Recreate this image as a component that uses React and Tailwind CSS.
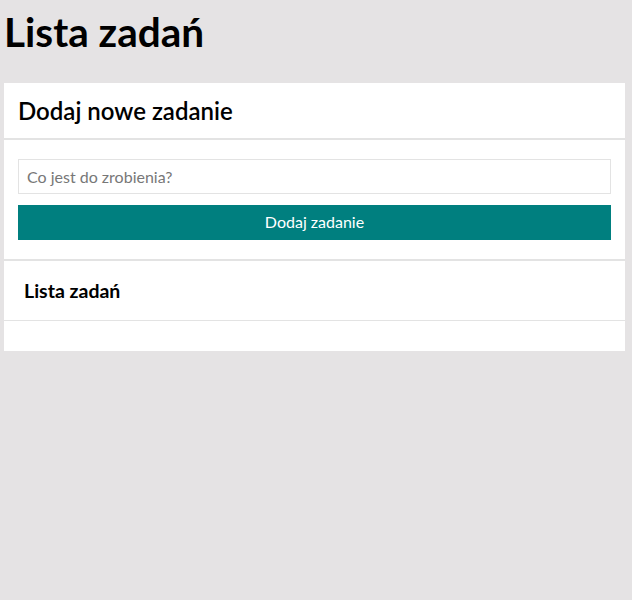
export default function App() {
  return (
    <div className="min-h-[600px] w-[632px] bg-[#e5e3e4] font-['Lato','Liberation_Sans',sans-serif] text-black">
      <h1 className="px-[4px] pt-[8px] pb-[27px] text-[40.5px] font-bold leading-[48px]">Lista zadań</h1>

      <div className="ml-1 w-[621px] bg-white">
        {/* Header */}
        <div className="flex h-[57px] items-center border-b-2 border-[#e3e3e3] px-[14px]">
          <h2 className="text-[24px] font-semibold leading-none">Dodaj nowe zadanie</h2>
        </div>

        {/* Form */}
        <div className="flex flex-col gap-[11px] border-b-2 border-[#e3e3e3] px-[14px] pt-[19px] pb-[19px]">
          <input
            type="text"
            placeholder="Co jest do zrobienia?"
            className="h-[35px] w-full border border-[#e3e3e3] px-[8px] text-[16px] placeholder:text-[#777777] outline-none"
          />
          <button className="h-[35px] w-full bg-[#007f7f] pb-[2px] text-[16px] text-white">Dodaj zadanie</button>
        </div>

        {/* List */}
        <div className="flex h-[60px] items-center border-b border-[#e3e3e3] px-[20px]">
          <h3 className="text-[19.5px] font-bold leading-none">Lista zadań</h3>
        </div>
        <div className="h-[30px]" />
      </div>
    </div>
  )
}
